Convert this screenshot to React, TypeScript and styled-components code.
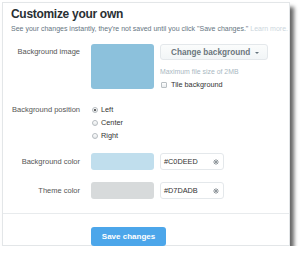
import React from "react";
import styled, { createGlobalStyle } from "styled-components";

const Global = createGlobalStyle`
  html, body { margin: 0; padding: 0; background: #ffffff; }
  body { font-family: "Liberation Sans", Arial, sans-serif; }
  * { box-sizing: border-box; }
`;

const Card = styled.div`
  margin: 2px 0 0 2px;
  width: 288px;
  background: #fff;
  border: 1px solid #e3e6e8;
  box-shadow: 4px 5px 4px rgba(0, 0, 0, 0.6);
  padding: 4px 0 0 0;
`;

const Header = styled.div`
  padding-left: 8px;
`;

const Title = styled.h2`
  margin: 0;
  font-size: 12px;
  line-height: 14px;
  font-weight: bold;
  letter-spacing: -0.3px;
  color: #292f33;
`;

const Subtitle = styled.p`
  margin: 4px 0 0 0;
  font-size: 7px;
  line-height: 8px;
  color: #66757f;
  white-space: nowrap;
`;

const Muted = styled.span`
  color: #ccd6dd;
`;

const Row = styled.div<{ $top: number }>`
  display: grid;
  grid-template-columns: 77px auto;
  column-gap: 11px;
  margin-top: ${(p) => p.$top}px;
  align-items: start;
`;

const Label = styled.div<{ $lh: number }>`
  text-align: right;
  font-size: 7.5px;
  line-height: ${(p) => p.$lh}px;
  color: #555555;
  white-space: nowrap;
`;

const Controls = styled.div`
  display: flex;
  gap: 6px;
  align-items: flex-start;
`;

const Swatch = styled.div<{ $color: string; $h: number }>`
  width: 63px;
  height: ${(p) => p.$h}px;
  border-radius: 3px;
  background: ${(p) => p.$color};
`;

const Column = styled.div`
  display: flex;
  flex-direction: column;
`;

const GhostButton = styled.button`
  width: 108px;
  height: 16px;
  padding: 0 0 0 10px;
  display: flex;
  align-items: center;
  gap: 5px;
  border: 1px solid #e4e8eb;
  border-radius: 3px;
  background: linear-gradient(#fbfcfc, #f2f5f7);
  font-family: "Liberation Sans", Arial, sans-serif;
  font-weight: bold;
  font-size: 8.2px;
  color: #6b767d;
  cursor: pointer;
`;

const Caret = styled.span`
  width: 0;
  height: 0;
  border-left: 2px solid transparent;
  border-right: 2px solid transparent;
  border-top: 2px solid #66757f;
  margin-top: 1px;
`;

const Hint = styled.div`
  margin-top: 6px;
  font-size: 6.9px;
  line-height: 11px;
  color: #aab8c2;
  white-space: nowrap;
`;

const Check = styled.label`
  margin-top: 1px;
  display: flex;
  align-items: center;
  gap: 4px;
  font-size: 7.3px;
  line-height: 13px;
  color: #333;
`;

const Box = styled.span`
  margin-left: 1px;
  width: 6px;
  height: 6px;
  border: 1px solid #b9bfc3;
  border-radius: 1px;
  background: linear-gradient(#fff, #e9ecee);
`;

const Radios = styled.div`
  display: flex;
  flex-direction: column;
`;

const RadioItem = styled.label`
  display: flex;
  align-items: center;
  gap: 3px;
  padding-left: 1px;
  font-size: 7.3px;
  line-height: 13px;
  color: #333;
`;

const Dot = styled.span<{ $on?: boolean }>`
  position: relative;
  width: 6px;
  height: 6px;
  border-radius: 50%;
  border: 1px solid #b6bcc0;
  background: linear-gradient(#fff, #e4e7e9);
  &::after {
    content: "";
    position: absolute;
    left: 1px;
    top: 1px;
    width: 2px;
    height: 2px;
    border-radius: 50%;
    background: ${(p) => (p.$on ? "#333" : "transparent")};
  }
`;

const ColorInput = styled.div`
  width: 64px;
  height: 17px;
  display: flex;
  align-items: center;
  justify-content: space-between;
  padding: 0 4px 0 3px;
  border: 1px solid #e4e8eb;
  border-radius: 3px;
  font-size: 7.3px;
  color: #333;
`;

const Divider = styled.hr`
  margin: 14px 0 0 0;
  border: 0;
  border-top: 1px solid #e8ebed;
`;

const Footer = styled.div`
  padding: 11px 0 0 88px;
  height: 31px;
`;

const PrimaryButton = styled.button`
  width: 75px;
  height: 19px;
  border: 0;
  border-radius: 3px;
  background: #4ca6ea;
  color: #fff;
  font-family: "Liberation Sans", Arial, sans-serif;
  font-weight: bold;
  font-size: 8px;
  padding: 0;
`;

const Picker = () => (
  <svg width="6" height="6" viewBox="0 0 6 6">
    <g stroke="#8f969b" strokeWidth="1" strokeLinecap="round">
      <line x1="3" y1="0.5" x2="3" y2="5.5" />
      <line x1="0.5" y1="3" x2="5.5" y2="3" />
      <line x1="1.2" y1="1.2" x2="4.8" y2="4.8" />
      <line x1="4.8" y1="1.2" x2="1.2" y2="4.8" />
    </g>
  </svg>
);

export default function App() {
  return (
    <>
      <Global />
      <Card>
        <Header>
          <Title>Customize your own</Title>
          <Subtitle>
            See your changes instantly, they're not saved until you click "Save changes."{" "}
            <Muted>Learn more.</Muted>
          </Subtitle>
        </Header>

        <Row $top={11}>
          <Label $lh={16}>Background image</Label>
          <Controls>
            <Swatch $color="#8cc1dc" $h={45} />
            <Column>
              <GhostButton>
                Change background <Caret />
              </GhostButton>
              <Hint>Maximum file size of 2MB</Hint>
              <Check>
                <Box />
                Tile background
              </Check>
            </Column>
          </Controls>
        </Row>

        <Row $top={12}>
          <Label $lh={13}>Background position</Label>
          <Radios>
            <RadioItem>
              <Dot $on />
              Left
            </RadioItem>
            <RadioItem>
              <Dot />
              Center
            </RadioItem>
            <RadioItem>
              <Dot />
              Right
            </RadioItem>
          </Radios>
        </Row>

        <Row $top={11}>
          <Label $lh={17}>Background color</Label>
          <Controls>
            <Swatch $color="#c0deed" $h={17} />
            <ColorInput>
              #C0DEED
              <Picker />
            </ColorInput>
          </Controls>
        </Row>

        <Row $top={12}>
          <Label $lh={17}>Theme color</Label>
          <Controls>
            <Swatch $color="#d7dadb" $h={17} />
            <ColorInput>
              #D7DADB
              <Picker />
            </ColorInput>
          </Controls>
        </Row>

        <Divider />
        <Footer>
          <PrimaryButton>Save changes</PrimaryButton>
        </Footer>
      </Card>
    </>
  );
}
